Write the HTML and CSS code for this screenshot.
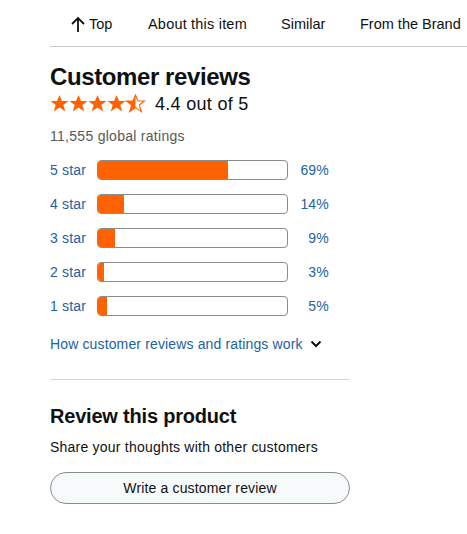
FILE: index.html
```html
<!DOCTYPE html>
<html>
<head>
<meta charset="utf-8">
<link rel="stylesheet" href="styles.css">
</head>
<body>
<nav class="nav">
  <a class="nav-item top"><svg class="arrow" width="14" height="17" viewBox="0 0 14 17"><path d="M7 16V2M1 8l6-6 6 6" fill="none" stroke="#0f1111" stroke-width="1.8"/></svg>Top</a>
  <a class="nav-item about">About this item</a>
  <a class="nav-item similar">Similar</a>
  <a class="nav-item">From the Brand</a>
</nav>
<main class="content">
  <h2 class="title">Customer reviews</h2>
  <div class="rating">
    <svg class="stars" width="96" height="20" viewBox="0 0 96 20">
      <defs>
        <path id="s" d="M9.5 1l2.5 6h6.5l-5.2 4 2 6.6-5.8-4-5.8 4 2-6.6-5.2-4h6.5z"/>
        <clipPath id="half"><rect x="0" y="0" width="9.5" height="20"/></clipPath>
      </defs>
      <use href="#s" x="0" y="0" fill="#ff6200"/>
      <use href="#s" x="19" y="0" fill="#ff6200"/>
      <use href="#s" x="38" y="0" fill="#ff6200"/>
      <use href="#s" x="57" y="0" fill="#ff6200"/>
      <g transform="translate(76 0)">
        <use href="#s" fill="none" stroke="#ff6200" stroke-width="1.1"/>
        <use href="#s" fill="#ff6200" clip-path="url(#half)"/>
      </g>
    </svg>
    <span class="rating-text">4.4 out of 5</span>
  </div>
  <p class="global">11,555 global ratings</p>
  <ul class="hist">
    <li class="row"><span class="lbl">5 star</span><span class="bar"><span class="fill" style="width:69%"></span></span><span class="pct">69%</span></li>
    <li class="row"><span class="lbl">4 star</span><span class="bar"><span class="fill" style="width:14%"></span></span><span class="pct">14%</span></li>
    <li class="row"><span class="lbl">3 star</span><span class="bar"><span class="fill" style="width:9%"></span></span><span class="pct">9%</span></li>
    <li class="row"><span class="lbl">2 star</span><span class="bar"><span class="fill" style="width:3%"></span></span><span class="pct">3%</span></li>
    <li class="row"><span class="lbl">1 star</span><span class="bar"><span class="fill" style="width:5%"></span></span><span class="pct">5%</span></li>
  </ul>
  <a class="how">How customer reviews and ratings work<svg class="chev" width="12" height="8" viewBox="0 0 12 8"><path d="M1.5 1.5l4.5 4.5 4.5-4.5" fill="none" stroke="#0f1111" stroke-width="2"/></svg></a>
  <hr class="divider">
  <h3 class="sub">Review this product</h3>
  <p class="share">Share your thoughts with other customers</p>
  <button class="btn">Write a customer review</button>
</main>
</body>
</html>
```
FILE: styles.css
```css
* { box-sizing: border-box; }
body {
  margin: 0;
  font-family: "Liberation Sans", Arial, sans-serif;
  color: #0f1111;
  background: #fff;
  letter-spacing: 0.2px;
}
.nav {
  display: flex;
  align-items: center;
  height: 47px;
  margin-left: 50px;
  padding-left: 21px;
  padding-top: 2px;
  border-bottom: 1px solid #c8c8c8;
  font-size: 14.5px;
  letter-spacing: 0;
  white-space: nowrap;
}
.nav-item { color: #0f1111; text-decoration: none; display: flex; align-items: center; }
.top { width: 77px; }
.about { width: 133px; letter-spacing: 0.2px; }
.similar { width: 79px; }
.arrow { margin-right: 4px; }
.content { margin-left: 50px; width: 300px; }
.title {
  margin: 15px 0 0;
  font-size: 24px;
  line-height: 30px;
  font-weight: 700;
  letter-spacing: -0.4px;
}
.rating { display: flex; align-items: center; height: 24px; }
.stars { display: block; }
.rating-text { margin-left: 9px; font-size: 18px; line-height: 24px; letter-spacing: 0.3px; }
.global {
  margin: 10px 0 0;
  font-size: 14px;
  line-height: 20px;
  color: #565959;
  letter-spacing: 0.28px;
}
.hist { list-style: none; margin: 14px 0 0; padding: 0; }
.row { display: flex; align-items: center; height: 20px; margin-bottom: 14px; font-size: 14px; color: #2162a1; }
.lbl { width: 47px; }
.bar {
  width: 191px;
  height: 20px;
  border: 1px solid #888c8c;
  border-radius: 4px;
  overflow: hidden;
  background: #fff;
}
.fill { display: block; height: 100%; background: #ff6200; }
.pct { width: 41px; text-align: right; }
.how {
  display: flex;
  align-items: center;
  margin-top: 18px;
  font-size: 14px;
  line-height: 20px;
  color: #2162a1;
  letter-spacing: 0.14px;
}
.chev { margin-left: 7px; }
.divider { margin: 25px 0 0; border: 0; border-top: 1px solid #d5d9d9; }
.sub { margin: 24px 0 0; font-size: 20px; line-height: 24px; font-weight: 700; letter-spacing: -0.2px; }
.share { margin: 9px 0 0; font-size: 14px; line-height: 20px; letter-spacing: 0.22px; }
.btn {
  display: block;
  width: 300px;
  height: 32px;
  margin-top: 15px;
  border: 1px solid #888c8c;
  border-radius: 16px;
  background: #f7fafa;
  font-family: inherit;
  font-size: 14px;
  letter-spacing: 0.15px;
  color: #0f1111;
}
```
